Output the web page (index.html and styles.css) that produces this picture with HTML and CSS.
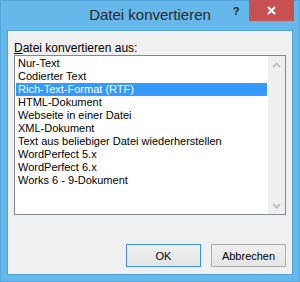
FILE: index.html
```html
<!DOCTYPE html>
<html lang="de">
<head>
  <meta charset="utf-8">
  <title>Datei konvertieren</title>
  <link rel="stylesheet" href="styles.css">
</head>
<body>
<div class="window">
  <div class="titlebar">
    <span></span>
    <span class="title">Datei konvertieren</span>
    <div class="controls">
      <span class="help">?</span>
      <span class="close">
        <svg width="9" height="9" viewBox="0 0 9 9"><path d="M1 1 L8 8 M8 1 L1 8" stroke="#fff" stroke-width="2" fill="none"/></svg>
      </span>
    </div>
  </div>
  <div class="client">
    <label class="caption" for="formats"><u>D</u>atei konvertieren aus:</label>
    <div class="listbox" id="formats">
      <ul class="items">
        <li>Nur-Text</li>
        <li>Codierter Text</li>
        <li class="selected">Rich-Text-Format (RTF)</li>
        <li>HTML-Dokument</li>
        <li>Webseite in einer Datei</li>
        <li>XML-Dokument</li>
        <li>Text aus beliebiger Datei wiederherstellen</li>
        <li>WordPerfect 5.x</li>
        <li>WordPerfect 6.x</li>
        <li>Works 6 - 9-Dokument</li>
      </ul>
      <div class="scrollbar">
        <span class="arrow"><svg width="9" height="6" viewBox="0 0 9 6"><path d="M1 5 L4.5 1.5 L8 5" stroke="#c2c2c2" stroke-width="2" fill="none"/></svg></span>
        <span class="arrow"><svg width="9" height="6" viewBox="0 0 9 6"><path d="M1 1 L4.5 4.5 L8 1" stroke="#c2c2c2" stroke-width="2" fill="none"/></svg></span>
      </div>
    </div>
    <div class="buttons">
      <button class="btn default">OK</button>
      <button class="btn">Abbrechen</button>
    </div>
  </div>
</div>
</body>
</html>
```

FILE: styles.css
```css
html, body {
  margin: 0;
  padding: 0;
}
body {
  font-family: "Liberation Sans", Arial, sans-serif;
  font-size: 11px;
  color: #000;
}
.window {
  width: 300px;
  height: 282px;
  box-sizing: border-box;
  background: #65b8e9;
  border: 1px solid #55a6da;
  padding: 0 6px 6px 6px;
  display: flex;
  flex-direction: column;
}
.titlebar {
  height: 29px;
  display: grid;
  grid-template-columns: 1fr auto 1fr;
  align-items: start;
}
.title {
  font-size: 15px;
  color: #2b2b2b;
  padding-top: 5px;
  white-space: nowrap;
}
.controls {
  display: flex;
  justify-content: flex-end;
  margin-right: -1px;
  margin-top: -1px;
}
.help {
  width: 26px;
  height: 21px;
  text-align: center;
  font-weight: bold;
  font-size: 11px;
  line-height: 22px;
  color: #1c1c1c;
}
.close {
  width: 45px;
  height: 21px;
  background: #c75050;
  display: flex;
  align-items: center;
  justify-content: center;
}
.client {
  flex: 1;
  background: #f0f0f0;
  border: 1px solid #52a2d6;
  padding: 0 6px 7px 6px;
  display: flex;
  flex-direction: column;
}
.caption {
  display: block;
  padding-top: 10px;
  height: 14px;
  line-height: 14px;
  font-size: 12px;
}
.caption u { text-decoration: underline; }
.listbox {
  height: 160px;
  box-sizing: border-box;
  border: 1px solid #828790;
  background: #fff;
  display: flex;
}
.items {
  list-style: none;
  margin: 0;
  padding: 1px;
  flex: 1;
}
.items li {
  height: 13px;
  line-height: 13px;
  padding-left: 2px;
  white-space: nowrap;
  overflow: hidden;
  box-sizing: border-box;
}
.items li.selected {
  background: #3399ff;
  color: #fff;
  border: 1px dotted #d87a10;
  padding-left: 1px;
  line-height: 11px;
}
.scrollbar {
  width: 17px;
  background: #efefef;
  display: flex;
  flex-direction: column;
  justify-content: space-between;
}
.arrow {
  height: 17px;
  display: flex;
  align-items: center;
  justify-content: center;
}
.buttons {
  margin-top: auto;
  display: flex;
  justify-content: flex-end;
  gap: 10px;
}
.btn {
  width: 75px;
  height: 23px;
  font-family: inherit;
  font-size: 11px;
  color: #000;
  background: linear-gradient(#f0f0f0, #e5e5e5);
  border: 1px solid #acacac;
  padding: 0;
}
.btn.default {
  border-color: #3c8fe8;
}
```
